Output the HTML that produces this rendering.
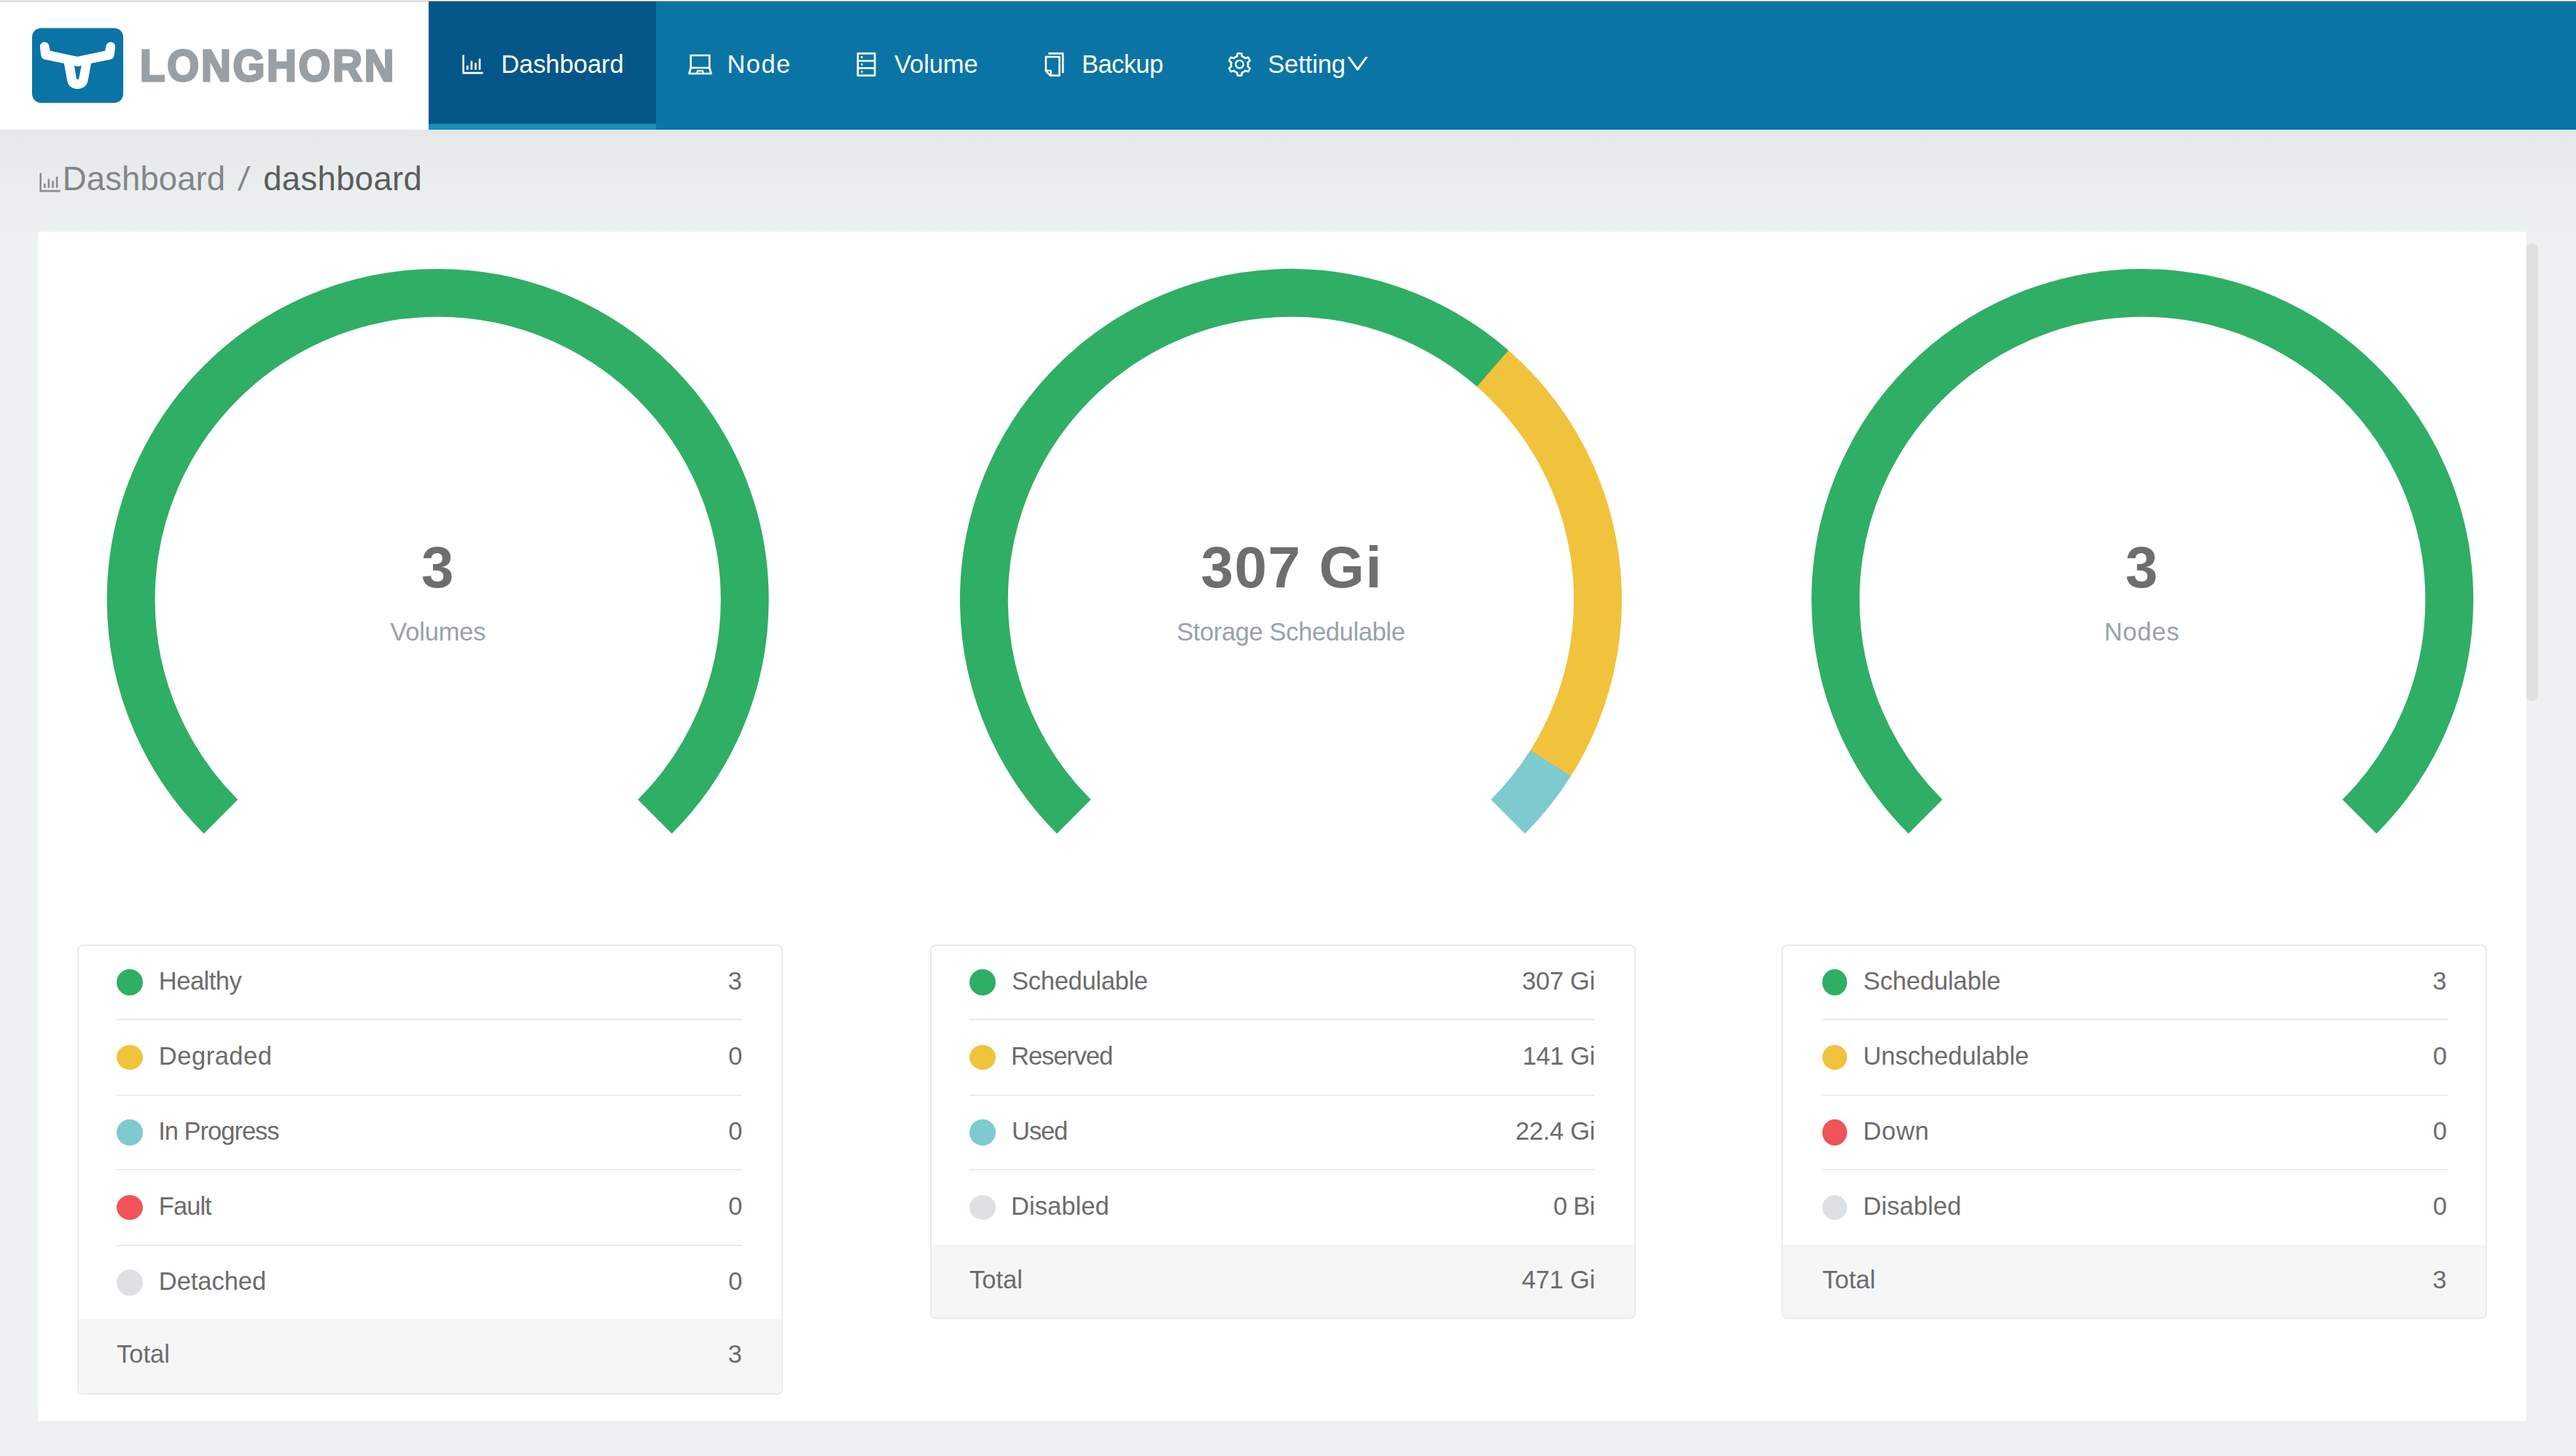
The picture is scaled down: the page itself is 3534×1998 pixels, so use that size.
<!DOCTYPE html>
<html lang="en"><head><meta charset="utf-8"><title>Longhorn</title>
<style>
html,body{margin:0;padding:0}
body{width:3534px;height:1998px;overflow:hidden;position:relative;background:#edf0f1;font-family:"Liberation Sans", sans-serif}
.t{position:absolute;white-space:nowrap;display:block}
.i{position:absolute;display:block;overflow:visible}
.b{position:absolute;box-sizing:content-box}
</style></head><body>
<div class="b" style="left:0px;top:178px;width:3534px;height:150px;background:linear-gradient(#e4e8e9 0%,#e8ebec 30%,#ebeeef 60%,#edf0f1 100%);"></div>
<div class="b" style="left:0px;top:0px;width:3534px;height:1px;background:#fff;"></div>
<div class="b" style="left:0px;top:1px;width:3534px;height:1px;background:#b9b7bb;"></div>
<div class="b" style="left:0px;top:2px;width:588px;height:176px;background:#fff;"></div>
<div class="b" style="left:588px;top:2px;width:2946px;height:176px;background:#0a74a5;"></div>
<div class="b" style="left:588px;top:2px;width:312px;height:168px;background:#055688;"></div>
<div class="b" style="left:588px;top:170px;width:312px;height:8px;background:#188fb8;"></div>
<svg class="i" style="left:40px;top:34px" width="140" height="112" viewBox="0 0 1820 1456">
<rect x="52" y="57" width="1626" height="1337" rx="165" ry="165" fill="#0a74a5"/>
<path fill="#fff" fill-rule="evenodd" d="M193 395C193 340 230 310 275 310C320 310 350 340 357 390L375 465L862 570L1352 465L1370 390C1377 340 1410 310 1455 310C1500 310 1535 340 1535 395L1517 540C1512 585 1490 608 1455 617L1105 690L1047 1000C1030 1090 960 1143 862 1143C765 1143 697 1090 680 1000L622 690L272 617C237 608 215 585 210 540ZM805 728Q865 752 932 728L885 972L845 972Z"/>
</svg>
<span class="t" style="left:191.5px;top:59.76px;font-size:61px;line-height:61px;font-weight:700;color:#98a0a5;-webkit-text-stroke:3px #98a0a5;letter-spacing:3px;transform:scaleX(0.925);transform-origin:0 0">LONGHORN</span>
<svg class="i" style="left:631.80px;top:71.90px" width="33" height="33" viewBox="64 64 896 896" fill="#fff"><path d="M888 792H200V168c0-4.400-3.600-8-8-8h-56c-4.400 0-8 3.600-8 8v688c0 4.400 3.600 8 8 8h752c4.400 0 8-3.600 8-8v-56c0-4.400-3.600-8-8-8zm-600-80h56c4.400 0 8-3.600 8-8V560c0-4.400-3.600-8-8-8h-56c-4.400 0-8 3.600-8 8v144c0 4.400 3.600 8 8 8zm152 0h56c4.400 0 8-3.600 8-8V384c0-4.400-3.600-8-8-8h-56c-4.400 0-8 3.600-8 8v320c0 4.400 3.600 8 8 8zm152 0h56c4.400 0 8-3.600 8-8V462c0-4.400-3.600-8-8-8h-56c-4.400 0-8 3.600-8 8v242c0 4.400 3.600 8 8 8zm152 0h56c4.400 0 8-3.600 8-8V304c0-4.400-3.600-8-8-8h-56c-4.400 0-8 3.600-8 8v400c0 4.400 3.600 8 8 8z"/></svg>
<span class="t" style="top:70.60px;font-size:34.5px;line-height:34.5px;color:#fff;letter-spacing:-0.078px;left:687.50px;">Dashboard</span>
<svg class="i" style="left:944.20px;top:71.90px" width="33" height="33" viewBox="64 64 896 896" fill="#fff"><path d="M956.9 845.1L896.4 632V168c0-17.700-14.300-32-32-32h-704c-17.700 0-32 14.300-32 32v464L67.900 845.100C60.400 866 75.800 888 98 888h828.800c22.200 0 37.600-22 30.100-42.900zM200.400 208h624v395h-624V208zm228.300 608l8.100-37h150.300l8.100 37H428.700zm224 0l-19.100-86.700c-.8-3.700-4.100-6.300-7.800-6.300H398.200c-3.800 0-7 2.600-7.800 6.300L371.300 816H151l42.300-149h638.200l42.300 149H652.700z"/></svg>
<span class="t" style="top:70.60px;font-size:34.5px;line-height:34.5px;color:#fff;letter-spacing:1.401px;left:997.50px;">Node</span>
<svg class="i" style="left:1171.70px;top:71.90px" width="33" height="33" viewBox="64 64 896 896" fill="#fff"><path d="M832 64H192c-17.700 0-32 14.300-32 32v832c0 17.700 14.300 32 32 32h640c17.700 0 32-14.300 32-32V96c0-17.700-14.300-32-32-32zm-600 72h560v208H232V136zm560 480H232V408h560v208zm0 272H232V680h560v208zM304 240a40 40 0 1 0 80 0 40 40 0 1 0-80 0zm0 272a40 40 0 1 0 80 0 40 40 0 1 0-80 0zm0 272a40 40 0 1 0 80 0 40 40 0 1 0-80 0z"/></svg>
<span class="t" style="top:70.60px;font-size:34.5px;line-height:34.5px;color:#fff;letter-spacing:-0.120px;left:1227.10px;">Volume</span>
<svg class="i" style="left:1429.50px;top:71.90px" width="33" height="33" viewBox="64 64 896 896" fill="#fff"><path d="M832 64H296c-4.400 0-8 3.600-8 8v56c0 4.400 3.600 8 8 8h496v688c0 4.400 3.600 8 8 8h56c4.400 0 8-3.600 8-8V96c0-17.700-14.300-32-32-32zM704 192H192c-17.700 0-32 14.300-32 32v530.700c0 8.500 3.400 16.600 9.400 22.600l173.300 173.300c2.200 2.200 4.700 4 7.400 5.500v1.900h4.200c3.500 1.300 7.200 2 11 2H704c17.700 0 32-14.300 32-32V224c0-17.700-14.300-32-32-32zM350 856.200L263.900 770H350v86.200zM664 888H414V746c0-22.100-17.900-40-40-40H232V264h432v624z"/></svg>
<span class="t" style="top:70.60px;font-size:34.5px;line-height:34.5px;color:#fff;letter-spacing:-0.600px;left:1484.00px;">Backup</span>
<svg class="i" style="left:1684.10px;top:71.90px" width="33" height="33" viewBox="64 64 896 896" fill="#fff"><path d="M924.8 625.7l-65.500-56c3.100-19 4.700-38.400 4.700-57.800s-1.600-38.800-4.700-57.800l65.500-56a32.030 32.030 0 0 0 9.300-35.200l-.9-2.600a442.530 442.530 0 0 0-79.700-137.900l-1.800-2.100a32.120 32.120 0 0 0-35.100-9.500l-81.300 28.900c-30-24.600-63.500-44-99.700-57.600l-15.700-85a32.050 32.050 0 0 0-25.800-25.700l-2.700-.5c-52.100-9.400-106.900-9.400-159 0l-2.700.5a32.050 32.050 0 0 0-25.800 25.700l-15.800 85.400a351.860 351.860 0 0 0-99 57.400l-81.900-29.100a32 32 0 0 0-35.100 9.500l-1.800 2.100a446.020 446.020 0 0 0-79.700 137.900l-.9 2.600c-4.500 12.500-.8 26.500 9.300 35.200l66.300 56.600c-3.100 18.800-4.600 38-4.600 57.100 0 19.200 1.500 38.400 4.600 57.100L99 625.500a32.030 32.030 0 0 0-9.300 35.200l.9 2.600c18.100 50.400 44.900 96.900 79.700 137.900l1.800 2.100a32.120 32.120 0 0 0 35.100 9.500l81.900-29.100c29.800 24.500 63.100 43.900 99 57.400l15.800 85.400a32.050 32.050 0 0 0 25.800 25.700l2.700.5a449.400 449.400 0 0 0 159 0l2.700-.5a32.050 32.050 0 0 0 25.800-25.700l15.700-85a350 350 0 0 0 99.700-57.600l81.300 28.900a32 32 0 0 0 35.100-9.500l1.800-2.100c34.800-41.100 61.600-87.500 79.700-137.900l.9-2.600c4.500-12.300.8-26.300-9.300-35zM788.300 465.900c2.500 15.100 3.800 30.600 3.800 46.100s-1.300 31-3.800 46.100l-6.600 40.100 74.700 63.900a370.030 370.030 0 0 1-42.600 73.600L721 702.800l-31.400 25.800c-23.900 19.600-50.500 35-79.300 45.800l-38.100 14.300-17.900 97a377.500 377.500 0 0 1-85 0l-17.900-97.200-37.800-14.500c-28.500-10.800-55-26.200-78.700-45.700l-31.400-25.900-93.400 33.200c-17-22.900-31.200-47.600-42.600-73.600l75.500-64.500-6.500-40c-2.400-14.900-3.700-30.300-3.700-45.500 0-15.300 1.200-30.600 3.700-45.500l6.500-40-75.500-64.500c11.300-26.100 25.600-50.700 42.600-73.600l93.400 33.200 31.400-25.900c23.700-19.500 50.200-34.900 78.700-45.700l37.900-14.300 17.900-97.200c28.100-3.200 56.800-3.200 85 0l17.900 97 38.100 14.300c28.700 10.800 55.400 26.200 79.300 45.800l31.400 25.800 92.800-32.900c17 22.900 31.200 47.600 42.600 73.600L781.800 426l6.500 39.900zM512 326c-97.200 0-176 78.800-176 176s78.800 176 176 176 176-78.800 176-176-78.800-176-176-176zm79.200 255.200A111.600 111.600 0 0 1 512 614c-29.900 0-58-11.700-79.200-32.800A111.600 111.600 0 0 1 400 502c0-29.900 11.700-58 32.800-79.200C454 401.600 482.100 390 512 390c29.900 0 58 11.600 79.200 32.800A111.600 111.600 0 0 1 624 502c0 29.900-11.700 58-32.800 79.200z"/></svg>
<span class="t" style="top:70.60px;font-size:34.5px;line-height:34.5px;color:#fff;letter-spacing:-0.100px;left:1739.20px;">Setting</span>
<svg class="i" style="left:1845.90px;top:71.40px" width="33" height="33" viewBox="64 64 896 896" fill="#fff"><path d="M884 256h-75c-5.100 0-9.900 2.500-12.900 6.600L512 654.200 227.900 262.600c-3-4.100-7.800-6.600-12.900-6.600h-75c-6.500 0-10.300 7.400-6.500 12.700l352.600 486.100c12.800 17.600 39 17.600 51.700 0l352.600-486.100c3.900-5.300.1-12.700-6.400-12.700z"/></svg>
<svg class="i" style="left:51.60px;top:233.80px" width="33" height="33" viewBox="64 64 896 896" fill="#8a8d8e"><path d="M888 792H200V168c0-4.400-3.600-8-8-8h-56c-4.400 0-8 3.600-8 8v688c0 4.400 3.600 8 8 8h752c4.400 0 8-3.600 8-8v-56c0-4.400-3.600-8-8-8zm-600-80h56c4.400 0 8-3.600 8-8V560c0-4.400-3.600-8-8-8h-56c-4.400 0-8 3.600-8 8v144c0 4.400 3.600 8 8 8zm152 0h56c4.400 0 8-3.600 8-8V384c0-4.400-3.600-8-8-8h-56c-4.400 0-8 3.600-8 8v320c0 4.400 3.600 8 8 8zm152 0h56c4.400 0 8-3.600 8-8V462c0-4.400-3.600-8-8-8h-56c-4.400 0-8 3.600-8 8v242c0 4.400 3.600 8 8 8zm152 0h56c4.400 0 8-3.600 8-8V304c0-4.400-3.600-8-8-8h-56c-4.400 0-8 3.600-8 8v400c0 4.400 3.600 8 8 8z"/></svg>
<span class="t" style="top:223.18px;font-size:45.5px;line-height:45.5px;color:#828686;letter-spacing:0.097px;left:85.80px;">Dashboard</span>
<span class="t" style="top:223.18px;font-size:45.5px;line-height:45.5px;color:#828686;left:325.30px;transform:skewX(-8deg);transform-origin:0 100%;">/</span>
<span class="t" style="top:223.18px;font-size:45.5px;line-height:45.5px;color:#5c5c5c;letter-spacing:0.325px;left:361.20px;">dashboard</span>
<div class="b" style="left:52px;top:318px;width:3414px;height:1632px;background:#fff;"></div>
<div class="b" style="left:3466px;top:333.5px;width:16px;height:628.5px;background:#e0e0e0;border-radius:8px;"></div>
<svg class="i" style="left:0;top:0" width="3534" height="1998" viewBox="0 0 3534 1998" fill="none" stroke-width="65.9"><path d="M302.97 1120.63A421.05 421.05 0 1 1 898.43 1120.63" stroke="#2fae66"/><path d="M1473.27 1120.63A421.05 421.05 0 0 1 2048.62 506.34" stroke="#2fae66"/><path d="M2047.79 505.61A421.05 421.05 0 0 1 2126.78 1048.08" stroke="#f1c33c"/><path d="M2127.37 1047.14A421.05 421.05 0 0 1 2068.73 1120.63" stroke="#7dcacf"/><path d="M2641.47 1120.63A421.05 421.05 0 1 1 3236.93 1120.63" stroke="#2fae66"/></svg>
<span class="t" style="top:739.28px;font-size:80px;line-height:80px;color:#6e6e6e;font-weight:700;left:600.30px;transform:translateX(-50%);">3</span>
<span class="t" style="top:849.70px;font-size:34.5px;line-height:34.5px;color:#98a2a9;letter-spacing:-0.199px;left:600.80px;transform:translateX(-50%);">Volumes</span>
<span class="t" style="top:739.28px;font-size:80px;line-height:80px;color:#6e6e6e;font-weight:700;letter-spacing:1.600px;left:1772.30px;transform:translateX(-50%);">307 Gi</span>
<span class="t" style="top:849.70px;font-size:34.5px;line-height:34.5px;color:#98a2a9;letter-spacing:-0.368px;left:1770.82px;transform:translateX(-50%);">Storage Schedulable</span>
<span class="t" style="top:739.28px;font-size:80px;line-height:80px;color:#6e6e6e;font-weight:700;left:2938.00px;transform:translateX(-50%);">3</span>
<span class="t" style="top:849.70px;font-size:34.5px;line-height:34.5px;color:#98a2a9;letter-spacing:0.800px;left:2938.50px;transform:translateX(-50%);">Nodes</span>
<div class="b" style="left:106px;top:1296.0px;width:964px;height:614.0px;border:2px solid #e9ebf0;border-radius:8px;background:#fff;overflow:hidden"><div style="position:absolute;left:0;right:0;bottom:0;height:101.8px;background:#f5f7f7"></div></div>
<div class="b" style="left:160px;top:1330.0px;width:36px;height:36px;border-radius:18.0px/18.0px;background:#2fae66"></div>
<span class="t" style="top:1329.00px;font-size:34.5px;line-height:34.5px;color:#6c6c6c;letter-spacing:-0.500px;left:217.80px;">Healthy</span>
<span class="t" style="top:1329.00px;font-size:34.5px;line-height:34.5px;color:#6c6c6c;right:2516.10px;">3</span>
<div class="b" style="left:160px;top:1398.0px;width:858px;height:2px;background:#e9ebf0;"></div>
<div class="b" style="left:160px;top:1434.3px;width:36px;height:34px;border-radius:18.0px/17.0px;background:#f1c33c"></div>
<span class="t" style="top:1432.30px;font-size:34.5px;line-height:34.5px;color:#6c6c6c;letter-spacing:0.513px;left:217.80px;">Degraded</span>
<span class="t" style="top:1432.30px;font-size:34.5px;line-height:34.5px;color:#6c6c6c;right:2515.60px;">0</span>
<div class="b" style="left:160px;top:1501.6px;width:858px;height:2px;background:#e9ebf0;"></div>
<div class="b" style="left:160px;top:1536.2px;width:36px;height:36px;border-radius:18.0px/18.0px;background:#7dcacf"></div>
<span class="t" style="top:1535.15px;font-size:34.5px;line-height:34.5px;color:#6c6c6c;letter-spacing:-1.000px;left:217.20px;">In Progress</span>
<span class="t" style="top:1535.15px;font-size:34.5px;line-height:34.5px;color:#6c6c6c;right:2515.60px;">0</span>
<div class="b" style="left:160px;top:1603.7px;width:858px;height:2px;background:#e9ebf0;"></div>
<div class="b" style="left:160px;top:1640.2px;width:36px;height:34px;border-radius:18.0px/17.0px;background:#ee5459"></div>
<span class="t" style="top:1638.20px;font-size:34.5px;line-height:34.5px;color:#6c6c6c;letter-spacing:-0.950px;left:217.80px;">Fault</span>
<span class="t" style="top:1638.20px;font-size:34.5px;line-height:34.5px;color:#6c6c6c;right:2515.60px;">0</span>
<div class="b" style="left:160px;top:1707.7px;width:858px;height:2px;background:#e9ebf0;"></div>
<div class="b" style="left:160px;top:1742.0px;width:36px;height:36px;border-radius:18.0px/18.0px;background:#dee1e4"></div>
<span class="t" style="top:1740.95px;font-size:34.5px;line-height:34.5px;color:#6c6c6c;letter-spacing:-0.059px;left:217.80px;">Detached</span>
<span class="t" style="top:1740.95px;font-size:34.5px;line-height:34.5px;color:#6c6c6c;right:2515.60px;">0</span>
<span class="t" style="top:1840.90px;font-size:34.5px;line-height:34.5px;color:#6c6c6c;left:160.00px;">Total</span>
<span class="t" style="top:1840.90px;font-size:34.5px;line-height:34.5px;color:#6c6c6c;right:2516.10px;">3</span>
<div class="b" style="left:1276px;top:1296.0px;width:964px;height:510.2px;border:2px solid #e9ebf0;border-radius:8px;background:#fff;overflow:hidden"><div style="position:absolute;left:0;right:0;bottom:0;height:100.4px;background:#f5f7f7"></div></div>
<div class="b" style="left:1330px;top:1330.0px;width:36px;height:36px;border-radius:18.0px/18.0px;background:#2fae66"></div>
<span class="t" style="top:1329.00px;font-size:34.5px;line-height:34.5px;color:#6c6c6c;letter-spacing:-0.300px;left:1388.10px;">Schedulable</span>
<span class="t" style="top:1329.00px;font-size:34.5px;line-height:34.5px;color:#6c6c6c;letter-spacing:-0.280px;right:1345.98px;">307 Gi</span>
<div class="b" style="left:1330px;top:1398.0px;width:858px;height:2px;background:#e9ebf0;"></div>
<div class="b" style="left:1330px;top:1434.3px;width:36px;height:34px;border-radius:18.0px/17.0px;background:#f1c33c"></div>
<span class="t" style="top:1432.30px;font-size:34.5px;line-height:34.5px;color:#6c6c6c;letter-spacing:-1.087px;left:1387.10px;">Reserved</span>
<span class="t" style="top:1432.30px;font-size:34.5px;line-height:34.5px;color:#6c6c6c;letter-spacing:-0.400px;right:1346.10px;">141 Gi</span>
<div class="b" style="left:1330px;top:1501.6px;width:858px;height:2px;background:#e9ebf0;"></div>
<div class="b" style="left:1330px;top:1536.2px;width:36px;height:36px;border-radius:18.0px/18.0px;background:#7dcacf"></div>
<span class="t" style="top:1535.15px;font-size:34.5px;line-height:34.5px;color:#6c6c6c;letter-spacing:-1.132px;left:1388.10px;">Used</span>
<span class="t" style="top:1535.15px;font-size:34.5px;line-height:34.5px;color:#6c6c6c;letter-spacing:-0.333px;right:1346.03px;">22.4 Gi</span>
<div class="b" style="left:1330px;top:1603.7px;width:858px;height:2px;background:#e9ebf0;"></div>
<div class="b" style="left:1330px;top:1640.2px;width:36px;height:34px;border-radius:18.0px/17.0px;background:#dee1e4"></div>
<span class="t" style="top:1638.20px;font-size:34.5px;line-height:34.5px;color:#6c6c6c;letter-spacing:0.056px;left:1387.10px;">Disabled</span>
<span class="t" style="top:1638.20px;font-size:34.5px;line-height:34.5px;color:#6c6c6c;letter-spacing:-0.734px;right:1346.43px;">0 Bi</span>
<span class="t" style="top:1738.95px;font-size:34.5px;line-height:34.5px;color:#6c6c6c;left:1330.00px;">Total</span>
<span class="t" style="top:1738.95px;font-size:34.5px;line-height:34.5px;color:#6c6c6c;letter-spacing:-0.240px;right:1345.94px;">471 Gi</span>
<div class="b" style="left:2444px;top:1296.0px;width:964px;height:510.2px;border:2px solid #e9ebf0;border-radius:8px;background:#fff;overflow:hidden"><div style="position:absolute;left:0;right:0;bottom:0;height:100.4px;background:#f5f7f7"></div></div>
<div class="b" style="left:2500px;top:1330.0px;width:34px;height:36px;border-radius:17.0px/18.0px;background:#2fae66"></div>
<span class="t" style="top:1329.00px;font-size:34.5px;line-height:34.5px;color:#6c6c6c;letter-spacing:-0.160px;left:2556.30px;">Schedulable</span>
<span class="t" style="top:1329.00px;font-size:34.5px;line-height:34.5px;color:#6c6c6c;right:177.60px;">3</span>
<div class="b" style="left:2500px;top:1398.0px;width:858px;height:2px;background:#e9ebf0;"></div>
<div class="b" style="left:2500px;top:1434.3px;width:34px;height:34px;border-radius:17.0px/17.0px;background:#f1c33c"></div>
<span class="t" style="top:1432.30px;font-size:34.5px;line-height:34.5px;color:#6c6c6c;letter-spacing:-0.067px;left:2556.00px;">Unschedulable</span>
<span class="t" style="top:1432.30px;font-size:34.5px;line-height:34.5px;color:#6c6c6c;right:177.10px;">0</span>
<div class="b" style="left:2500px;top:1501.6px;width:858px;height:2px;background:#e9ebf0;"></div>
<div class="b" style="left:2500px;top:1536.2px;width:34px;height:36px;border-radius:17.0px/18.0px;background:#ee5459"></div>
<span class="t" style="top:1535.15px;font-size:34.5px;line-height:34.5px;color:#6c6c6c;letter-spacing:0.667px;left:2556.00px;">Down</span>
<span class="t" style="top:1535.15px;font-size:34.5px;line-height:34.5px;color:#6c6c6c;right:177.10px;">0</span>
<div class="b" style="left:2500px;top:1603.7px;width:858px;height:2px;background:#e9ebf0;"></div>
<div class="b" style="left:2500px;top:1640.2px;width:34px;height:34px;border-radius:17.0px/17.0px;background:#dee1e4"></div>
<span class="t" style="top:1638.20px;font-size:34.5px;line-height:34.5px;color:#6c6c6c;letter-spacing:0.056px;left:2556.00px;">Disabled</span>
<span class="t" style="top:1638.20px;font-size:34.5px;line-height:34.5px;color:#6c6c6c;right:177.10px;">0</span>
<span class="t" style="top:1738.95px;font-size:34.5px;line-height:34.5px;color:#6c6c6c;left:2500.00px;">Total</span>
<span class="t" style="top:1738.95px;font-size:34.5px;line-height:34.5px;color:#6c6c6c;right:177.60px;">3</span>
</body></html>
